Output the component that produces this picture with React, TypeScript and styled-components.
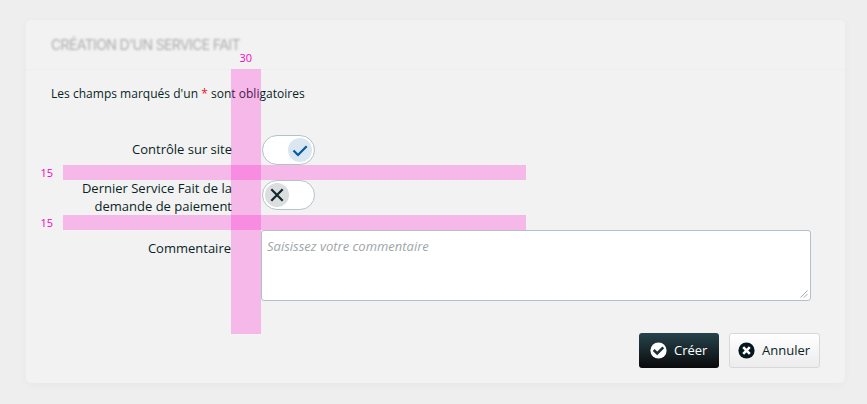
import React from 'react';
import styled, { createGlobalStyle } from 'styled-components';

const GlobalStyle = createGlobalStyle`
  * { box-sizing: border-box; }
  body {
    margin: 0;
    background: #eeeeee;
    font: 13px/18px "Open Sans", "Noto Sans", sans-serif;
    font-weight: 370;
    color: #0b1f26;
  }
`;

const Page = styled.main`
  position: relative;
  width: 867px;
  height: 404px;
  padding: 20px 22px 21px 26px;
  overflow: hidden;
`;

const Panel = styled.section`
  height: 363px;
  border-radius: 5px;
  background: #f2f2f2;
  box-shadow: 0 2px 8px rgba(0, 0, 0, 0.03);
`;

const Header = styled.header`
  display: flex;
  align-items: center;
  height: 50px;
  padding: 0 25px;
  border-bottom: 1px solid #eeeeee;
`;

const Title = styled.h1`
  margin: 0;
  font: 400 14px/12px Inter, sans-serif;
  letter-spacing: -0.62px;
  color: #adadad;
  filter: blur(1px);
  white-space: nowrap;
`;

const Notice = styled.p`
  margin: 0;
  padding: 15px 25px 0;
  height: 65px;
  font-size: 12px;
  letter-spacing: 0.02px;
`;

const Required = styled.span`
  color: #f0141e;
`;

const Form = styled.form`
  display: grid;
  grid-template-columns: 206px 550px;
  column-gap: 29px;
`;

const Label = styled.label<{ $top: number; $inset?: number }>`
  padding-top: ${(p) => p.$top}px;
  padding-right: ${(p) => p.$inset ?? 0}px;
  text-align: right;
  white-space: nowrap;
`;

const LabelLines = styled.span`
  display: block;
  margin-top: -1px;
`;

const Switch = styled.button.attrs({ type: 'button' })<{ $on?: boolean }>`
  display: flex;
  justify-content: ${(p) => (p.$on ? 'flex-end' : 'flex-start')};
  align-items: center;
  width: 53.5px;
  height: 30px;
  margin: 0 0 ${(p) => (p.$on ? 15 : 20)}px 0.6px;
  padding: 0 2px;
  border: 1px solid #b4c2ca;
  border-radius: 15px;
  background: #fff;
`;

const Knob = styled.span<{ $on?: boolean }>`
  display: flex;
  width: 24px;
  height: 24px;
  border-radius: 50%;
  background: ${(p) => (p.$on ? '#dae7f1' : '#dadedf')};
`;

const CommentField = styled.div`
  position: relative;
  height: 71px;
`;

const Comment = styled.textarea`
  display: block;
  width: 550px;
  height: 71px;
  padding: 6px 5px;
  border: 1px solid #b2c1c9;
  border-radius: 3px;
  background: #fff;
  font: 13px/18px "Open Sans", "Noto Sans", sans-serif;
  font-weight: 370;
  resize: none;
  &::placeholder {
    color: #a0a6a8;
    font-style: italic;
    opacity: 1;
  }
`;

const Grip = styled.svg`
  position: absolute;
  right: 3px;
  bottom: 3px;
  pointer-events: none;
`;

const Actions = styled.footer`
  display: flex;
  justify-content: flex-end;
  gap: 10px;
  padding: 32px 25px 0 0;
`;

const Button = styled.button<{ $primary?: boolean }>`
  display: flex;
  align-items: center;
  gap: 7px;
  width: ${(p) => (p.$primary ? 80 : 91)}px;
  height: 35px;
  padding: 0 0 0 ${(p) => (p.$primary ? 11 : 8)}px;
  border: ${(p) => (p.$primary ? '0' : '1px solid #d8d8d8')};
  border-radius: 3px;
  background: ${(p) =>
    p.$primary ? 'linear-gradient(#27434c, #0a0a0b)' : 'linear-gradient(#ffffff, #ececec)'};
  color: ${(p) => (p.$primary ? '#fff' : '#0b1f26')};
  font: 13px/18px "Open Sans", "Noto Sans", sans-serif;
  font-weight: 370;
`;

const ButtonText = styled.span`
  padding-bottom: 2px;
`;

const Guide = styled.div<{ $x: number; $y: number; $w: number; $h: number }>`
  position: absolute;
  left: ${(p) => p.$x}px;
  top: ${(p) => p.$y}px;
  width: ${(p) => p.$w}px;
  height: ${(p) => p.$h}px;
  background: rgba(254, 0, 200, 0.24);
  pointer-events: none;
`;

const Measure = styled.span<{ $x: number; $y: number }>`
  position: absolute;
  left: ${(p) => p.$x}px;
  top: ${(p) => p.$y}px;
  font-size: 11px;
  line-height: 14px;
  color: #f900c4;
`;

const SwitchIcon = ({ on }: { on?: boolean }) => (
  <svg width="24" height="24" viewBox="0 0 24 24" fill="none" strokeWidth="2.2">
    {on ? (
      <path d="M5.5 12.5l4.5 4.5 8.7-8.7" stroke="#005c9d" />
    ) : (
      <path d="M6.3 6.2l11.4 11.6M17.7 6.2L6.3 17.8" stroke="#14272d" />
    )}
  </svg>
);

const ButtonIcon = ({ check }: { check?: boolean }) => (
  <svg width="17" height="17" viewBox="0 0 17 17" fill="none">
    <circle cx="8.5" cy="8.5" r="8.1" fill={check ? '#fff' : '#03191f'} />
    {check ? (
      <path d="M3.7 8l3.5 3.5 6.1-6.1" stroke="#1b3037" strokeWidth="2.6" />
    ) : (
      <path d="M5.2 5.2l6.6 6.6M11.8 5.2l-6.6 6.6" stroke="#fff" strokeWidth="2.6" />
    )}
  </svg>
);

export default function App() {
  return (
    <>
      <GlobalStyle />
      <Page>
        <Panel>
          <Header>
            <Title>CRÉATION D'UN SERVICE FAIT</Title>
          </Header>
          <Notice>
            Les champs marqués d'un <Required>*</Required> sont obligatoires
          </Notice>
          <Form>
            <Label $top={5}>Contrôle sur site</Label>
            <Switch $on aria-label="Contrôle sur site">
              <Knob $on><SwitchIcon on /></Knob>
            </Switch>
            <Label $top={0}>
              <LabelLines>Dernier Service Fait de la<br />demande de paiement</LabelLines>
            </Label>
            <Switch aria-label="Dernier Service Fait">
              <Knob><SwitchIcon /></Knob>
            </Switch>
            <Label $top={9} $inset={1}>Commentaire</Label>
            <CommentField>
              <Comment placeholder="Saisissez votre commentaire" />
              <Grip width="8" height="8" viewBox="0 0 8 8" stroke="#8e9699" strokeWidth="0.8">
                <path d="M0.5 7.5L7.5 0.5M4 7.5L7.5 4" />
              </Grip>
            </CommentField>
          </Form>
          <Actions>
            <Button $primary><ButtonIcon check /><ButtonText>Créer</ButtonText></Button>
            <Button><ButtonIcon /><ButtonText>Annuler</ButtonText></Button>
          </Actions>
        </Panel>
        <Guide $x={231} $y={68.5} $w={30.3} $h={265.3} />
        <Guide $x={63} $y={165} $w={462.6} $h={15} />
        <Guide $x={63} $y={215} $w={462.6} $h={15} />
        <Measure $x={239.4} $y={51}>30</Measure>
        <Measure $x={40.4} $y={166}>15</Measure>
        <Measure $x={40.4} $y={216}>15</Measure>
      </Page>
    </>
  );
}
